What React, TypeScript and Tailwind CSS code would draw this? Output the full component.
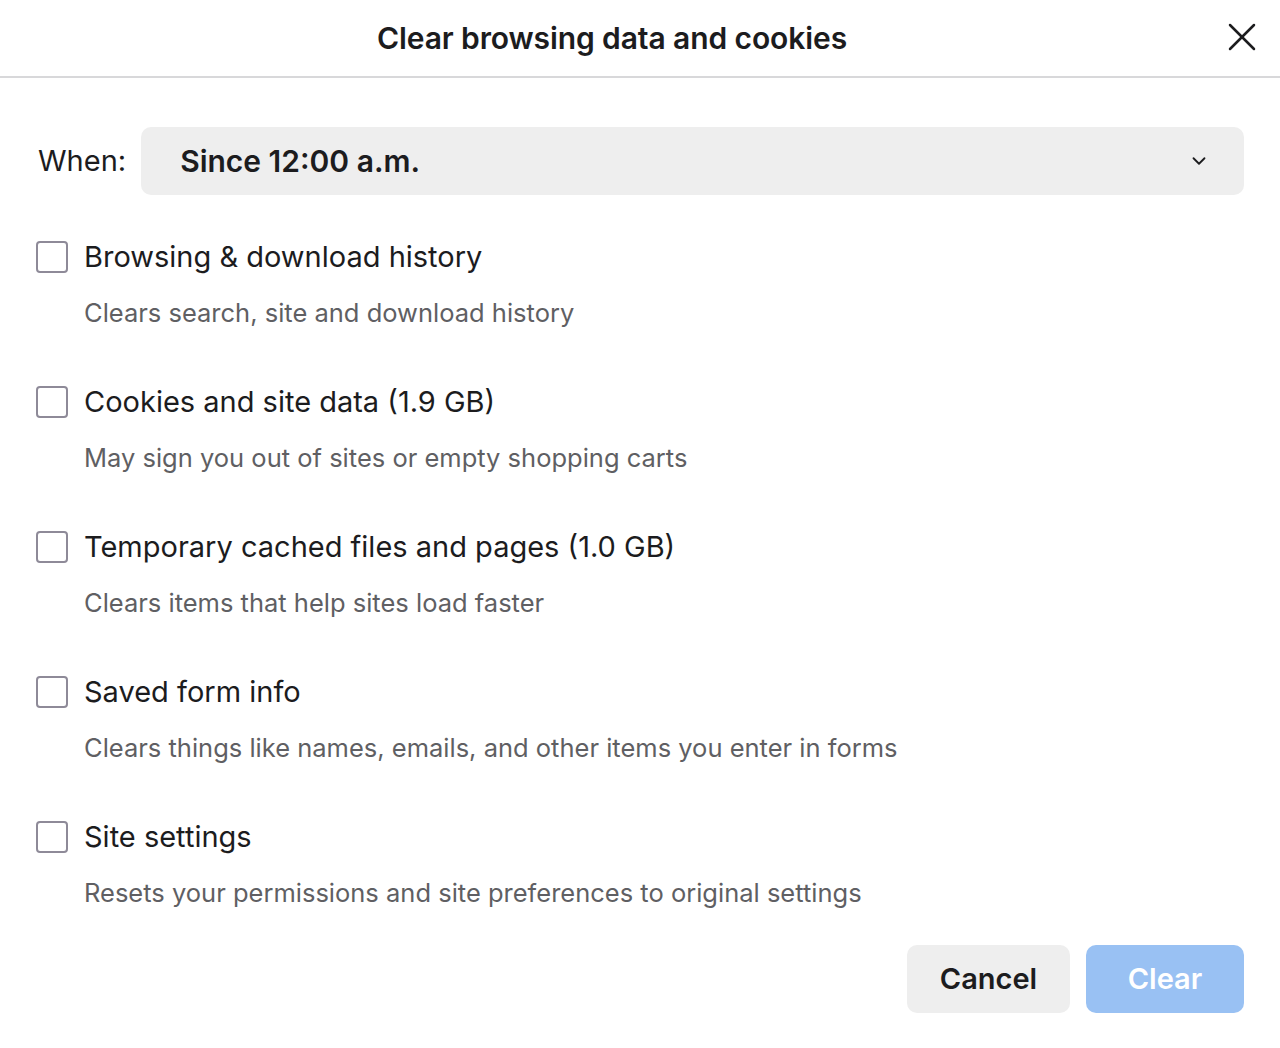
import { ChevronDown, X } from "lucide-react";

const OPTIONS = [
  { label: "Browsing & download history", hint: "Clears search, site and download history" },
  { label: "Cookies and site data (1.9 GB)", hint: "May sign you out of sites or empty shopping carts" },
  { label: "Temporary cached files and pages (1.0 GB)", hint: "Clears items that help sites load faster" },
  { label: "Saved form info", hint: "Clears things like names, emails, and other items you enter in forms" },
  { label: "Site settings", hint: "Resets your permissions and site preferences to original settings" },
];

export default function App() {
  return (
    <div className="h-[1048px] w-[1280px] bg-white font-['Inter',sans-serif] text-[#1c1c1e]">
      <header className="relative flex h-[78px] items-center justify-center border-b-2 border-[#d8d8da] pr-[56px]">
        <h1 className="text-[30px] font-semibold tracking-[-0.1px]">Clear browsing data and cookies</h1>
        <button type="button" className="absolute right-[14px] top-[13px] text-[#1c1c1e]">
          <X className="h-[48px] w-[48px]" strokeWidth={1.25} />
        </button>
      </header>

      <main className="px-[36px] pt-[49px]">
        <div className="flex items-center gap-[15px]">
          <span className="pl-[2px] text-[29px]">When:</span>
          <div className="flex h-[68px] flex-1 items-center justify-between rounded-[10px] bg-[#eeeeee] pl-[39px] pr-[34px]">
            <span className="text-[30px] font-semibold">Since 12:00 a.m.</span>
            <ChevronDown className="h-[22px] w-[22px]" strokeWidth={2} />
          </div>
        </div>

        <ul className="mt-[45px] flex flex-col gap-[57px]">
          {OPTIONS.map((o) => (
            <li key={o.label} className="flex flex-col">
              <label className="flex items-center gap-[16px]">
                <span className="h-[32px] w-[32px] rounded-[4px] border-2 border-[#8e8a98] bg-white" />
                <span className="text-[29px] leading-[34px]">{o.label}</span>
              </label>
              <p className="mt-[24px] pl-[48px] text-[25.5px] leading-[30px] text-[#5f5f63]">{o.hint}</p>
            </li>
          ))}
        </ul>

        <div className="mt-[37px] flex justify-end gap-[16px]">
          <button
            type="button"
            className="h-[68px] w-[163px] rounded-[10px] bg-[#eeeeee] text-[29px] font-semibold text-[#1c1c1e]"
          >
            Cancel
          </button>
          <button
            type="button"
            className="h-[68px] w-[158px] rounded-[10px] bg-[#99c1f3] text-[29px] font-semibold text-white"
          >
            Clear
          </button>
        </div>
      </main>
    </div>
  );
}
